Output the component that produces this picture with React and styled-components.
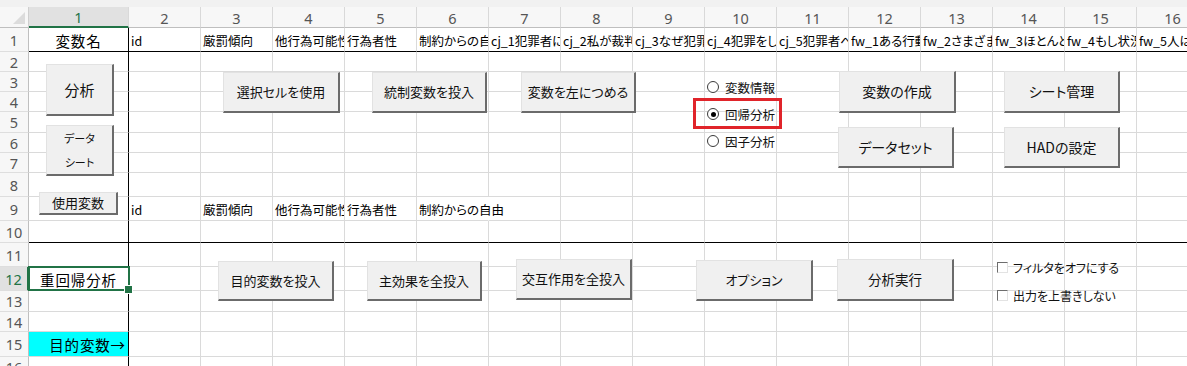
import React from 'react';
import styled, { createGlobalStyle } from 'styled-components';

const JP = `"Noto Sans CJK JP", "Noto Sans", sans-serif`;
const GRID = '#dadada';
const GREEN = '#217346';

const GlobalStyle = createGlobalStyle`
  html, body { margin: 0; padding: 0; background: #fff; }
  body { font-family: ${JP}; color: #000; overflow: hidden; }
  * { box-sizing: border-box; }
`;

const Window = styled.div`
  position: relative;
  width: 1187px;
  height: 366px;
  overflow: hidden;
  background: #fff;
  display: flex;
  flex-direction: column;
`;

const TopBand = styled.div`
  flex: none;
  height: 7px;
  background: #f1f1f1;
`;

const Sheet = styled.div`
  display: grid;
  grid-template-columns: 29px 100px repeat(15, 72px);
  grid-template-rows: 21px 24px 20px 20px 20px 21px 20px 20px 24px 24px 22px 24px 24px 21px 20px 25px 20px;
  font-feature-settings: "palt" 1;
`;

const Corner = styled.div`
  position: relative;
  background: #f7f7f7;
  border-right: 1px solid #cfcfcf;
  border-bottom: 1px solid #bfbfbf;
  &::after {
    content: '';
    position: absolute;
    right: 3px;
    bottom: 3px;
    width: 0;
    height: 0;
    border-left: 12px solid transparent;
    border-bottom: 12px solid #dcdcdc;
  }
`;

const ColHead = styled.div`
  display: flex;
  align-items: center;
  justify-content: center;
  font-family: "Noto Sans", sans-serif;
  font-size: 14.5px;
  color: ${p => (p.$active ? GREEN : '#555')};
  background: ${p => (p.$active ? '#e1e1e1' : '#f7f7f7')};
  border-right: 1px solid #d9d9d9;
  border-bottom: ${p => (p.$active ? `2px solid ${GREEN}` : '1px solid #bfbfbf')};
  padding-top: 1px;
`;

const RowHead = styled.div`
  display: flex;
  align-items: center;
  justify-content: center;
  font-family: "Noto Sans", sans-serif;
  font-size: 14.5px;
  color: ${p => (p.$active ? GREEN : '#555')};
  background: ${p => (p.$active ? '#e1e1e1' : '#f7f7f7')};
  border-right: ${p => (p.$active ? `2px solid ${GREEN}` : '1px solid #bfbfbf')};
  border-bottom: 1px solid #dedede;
`;

const Cell = styled.div`
  position: relative;
  display: flex;
  align-items: center;
  justify-content: ${p => (p.$align === 'center' ? 'center' : p.$align === 'right' ? 'flex-end' : 'flex-start')};
  padding: 1px 2px 0 2px;
  font-size: ${p => p.$size || 12.5}px;
  white-space: nowrap;
  overflow: ${p => (p.$open ? 'visible' : 'hidden')};
  background: ${p => p.$fill || 'transparent'};
  border-right: 1px solid ${p => (p.$thickRight ? '#000' : p.$noRight ? 'transparent' : GRID)};
  border-bottom: 1px solid ${p => (p.$thickBottom ? '#000' : GRID)};
  letter-spacing: ${p => (p.$wide ? '0.06em' : '0')};
`;

const Selection = styled.div`
  position: absolute;
  left: -1px;
  top: -1px;
  right: -2px;
  bottom: -1px;
  border: 2px solid ${GREEN};
  z-index: 3;
  &::after {
    content: '';
    position: absolute;
    right: -5px;
    bottom: -5px;
    width: 7px;
    height: 7px;
    background: ${GREEN};
    border: 1px solid #fff;
  }
`;

const Overlay = styled.div`
  position: absolute;
  inset: 0;
  pointer-events: none;
  z-index: 5;
  font-feature-settings: "palt" 1;
`;

const FormButton = styled.div`
  position: absolute;
  left: ${p => p.$x}px;
  top: ${p => p.$y}px;
  width: ${p => p.$w}px;
  height: ${p => p.$h}px;
  background: #f0f0f0;
  border-top: 1px solid #e2e2e2;
  border-left: 1px solid #e2e2e2;
  border-right: 2px solid #6b6b6b;
  border-bottom: 2px solid #6b6b6b;
  display: flex;
  flex-direction: column;
  align-items: center;
  justify-content: center;
  font-size: ${p => p.$size || 13}px;
  color: #111;
  white-space: nowrap;
  line-height: ${p => (p.$stack ? '24px' : '1.2')};
`;

const RadioGroup = styled.div`
  position: absolute;
  left: 707px;
  top: 78px;
  display: flex;
  flex-direction: column;
  gap: 9px;
`;

const OptionRow = styled.div`
  display: flex;
  align-items: center;
  gap: ${p => (p.$tight ? 5 : 6)}px;
  height: 18px;
  font-size: ${p => p.$size || 12.5}px;
  color: #111;
  white-space: nowrap;
`;

const Radio = styled.span`
  position: relative;
  width: 12px;
  height: 12px;
  border-radius: 50%;
  border: 1px solid #3a3a3a;
  background: #fff;
  flex: none;
  &::after {
    content: '';
    display: ${p => (p.$on ? 'block' : 'none')};
    position: absolute;
    left: 2.5px;
    top: 2.5px;
    width: 5px;
    height: 5px;
    border-radius: 50%;
    background: #000;
  }
`;

const Highlight = styled.div`
  position: absolute;
  left: 693px;
  top: 98px;
  width: 89px;
  height: 31px;
  border: 3px solid #e0242a;
`;

const CheckGroup = styled.div`
  position: absolute;
  left: 997px;
  top: 258px;
  display: flex;
  flex-direction: column;
  gap: 10px;
`;

const CheckBox = styled.span`
  width: 11px;
  height: 11px;
  flex: none;
  background: #fff;
  border-top: 1px solid #6d6d6d;
  border-left: 1px solid #6d6d6d;
  border-right: 1px solid #e3e3e3;
  border-bottom: 1px solid #e3e3e3;
`;

const header1 = ['変数名', 'id', '厳罰傾向', '他行為可能性', '行為者性', '制約からの自由', 'cj_1犯罪者に対する', 'cj_2私が裁判官なら', 'cj_3なぜ犯罪者を', 'cj_4犯罪をした人', 'cj_5犯罪者への', 'fw_1ある行動を', 'fw_2さまざまな', 'fw_3ほとんどの', 'fw_4もし状況が', 'fw_5人は'];
const row9 = ['', 'id', '厳罰傾向', '他行為可能性', '行為者性', '制約からの自由'];

const ROWS = 16;
const COLS = 16;

function cellProps(r, c) {
  const p = { text: '', align: 'left' };
  if (r === 1) {
    p.text = header1[c - 1];
    if (c === 1) { p.align = 'center'; p.size = 14.5; p.wide = true; }
  }
  if (r === 9 && c <= row9.length) {
    p.text = row9[c - 1];
    if (c === 6) { p.open = true; p.noRight = true; }
  }
  if (r === 12 && c === 1) { p.text = '重回帰分析'; p.align = 'center'; p.size = 14.5; p.wide = true; p.selected = true; p.open = true; }
  if (r === 15 && c === 1) { p.text = '目的変数→'; p.align = 'right'; p.size = 14.5; p.wide = true; p.fill = '#00ffff'; }
  p.thickRight = c === 1;
  p.thickBottom = r === 1 || r === 10;
  return p;
}

const buttons = [
  { x: 46, y: 64, w: 68, h: 52, size: 15, label: '分析' },
  { x: 46, y: 125, w: 68, h: 51, size: 11, lines: ['データ', 'シート'] },
  { x: 39, y: 192, w: 79, h: 23, size: 13, label: '使用変数' },
  { x: 223, y: 72, w: 117, h: 41, label: '選択セルを使用' },
  { x: 372, y: 72, w: 115, h: 41, label: '統制変数を投入' },
  { x: 521, y: 72, w: 115, h: 41, label: '変数を左につめる' },
  { x: 839, y: 71, w: 117, h: 42, size: 14, label: '変数の作成' },
  { x: 1004, y: 71, w: 116, h: 42, size: 14, label: 'シート管理' },
  { x: 838, y: 127, w: 116, h: 41, size: 14, label: 'データセット' },
  { x: 1004, y: 127, w: 116, h: 41, size: 14, label: 'HADの設定' },
  { x: 218, y: 261, w: 116, h: 40, label: '目的変数を投入' },
  { x: 367, y: 261, w: 115, h: 40, label: '主効果を全投入' },
  { x: 516, y: 259, w: 116, h: 41, label: '交互作用を全投入' },
  { x: 696, y: 260, w: 117, h: 41, label: 'オプション' },
  { x: 837, y: 259, w: 117, h: 42, size: 13.5, label: '分析実行' },
];

export default function App() {
  const cells = [];
  cells.push(<Corner key="corner" />);
  for (let c = 1; c <= COLS; c++) {
    cells.push(<ColHead key={`h${c}`} $active={c === 1}>{c}</ColHead>);
  }
  for (let r = 1; r <= ROWS; r++) {
    cells.push(<RowHead key={`r${r}`} $active={r === 12}>{r}</RowHead>);
    for (let c = 1; c <= COLS; c++) {
      const p = cellProps(r, c);
      cells.push(
        <Cell
          key={`${r}-${c}`}
          $align={p.align}
          $size={p.size}
          $open={p.open}
          $noRight={p.noRight}
          $fill={p.fill}
          $wide={p.wide}
          $thickRight={p.thickRight}
          $thickBottom={p.thickBottom}
        >
          {p.text}
          {p.selected && <Selection />}
        </Cell>
      );
    }
  }

  return (
    <>
      <GlobalStyle />
      <Window>
        <TopBand />
        <Sheet>{cells}</Sheet>
        <Overlay>
          {buttons.map((b, i) => (
            <FormButton key={i} $x={b.x} $y={b.y} $w={b.w} $h={b.h} $size={b.size} $stack={!!b.lines}>
              {b.lines ? b.lines.map(l => <span key={l}>{l}</span>) : b.label}
            </FormButton>
          ))}
          <RadioGroup>
            <OptionRow><Radio />変数情報</OptionRow>
            <OptionRow><Radio $on />回帰分析</OptionRow>
            <OptionRow><Radio />因子分析</OptionRow>
          </RadioGroup>
          <Highlight />
          <CheckGroup>
            <OptionRow $size={12} $tight><CheckBox />フィルタをオフにする</OptionRow>
            <OptionRow $size={12} $tight><CheckBox />出力を上書きしない</OptionRow>
          </CheckGroup>
        </Overlay>
      </Window>
    </>
  );
}
